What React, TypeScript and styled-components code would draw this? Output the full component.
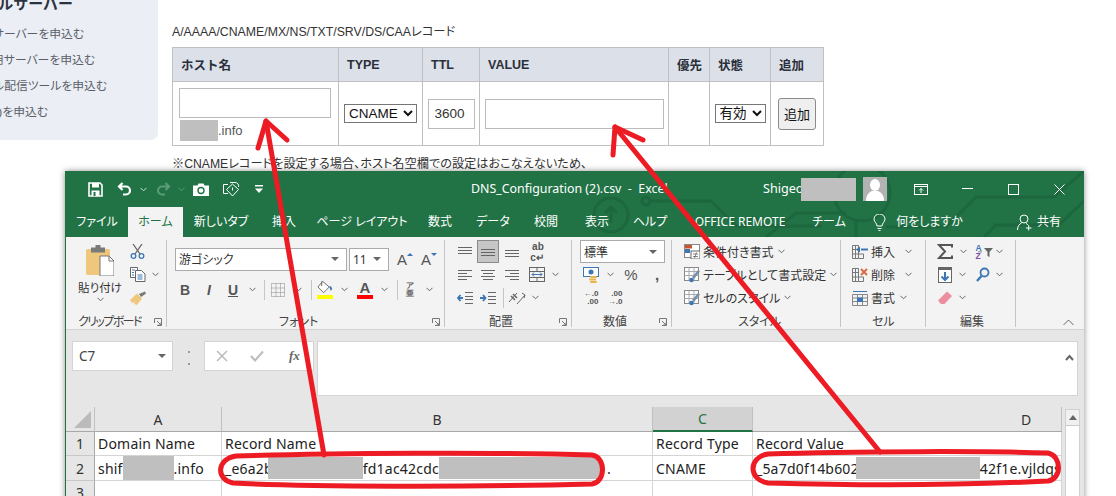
import React from "react";
import styled, { createGlobalStyle } from "styled-components";

const Global = createGlobalStyle`
  html, body {
    margin: 0;
    padding: 0;
    background: #fff;
    font-family: "Liberation Sans", "Noto Sans CJK JP", sans-serif;
  }
`;

const Page = styled.div`
  position: relative;
  width: 1116px;
  height: 496px;
  overflow: hidden;
  background: #fff;
`;

/* web page behind the excel window */
const Web = styled.div`
  display: flex;
  height: 100%;
`;

const Sidebar = styled.nav`
  flex: none;
  width: 158px;
  height: 140px;
  box-sizing: border-box;
  background: #ebeef4;
  border-bottom-right-radius: 7px;
  color: #5a5f6a;
  font-size: 11.8px;
`;

const SideTitle = styled.div`
  display: flex;
  justify-content: flex-end;
  width: 73px;
  height: 12px;
  margin-bottom: 13px;
  white-space: nowrap;
  font-size: 15px;
  font-weight: 700;
  line-height: 7px;
  color: #2c3340;
`;

const SideItem = styled.div<{ $end: number }>`
  display: flex;
  justify-content: flex-end;
  width: ${(p) => p.$end}px;
  height: 26px;
  line-height: 18px;
  white-space: nowrap;
  font-feature-settings: "palt";
`;

const Main = styled.main`
  padding: 24px 0 0 14px;
  color: #333;
`;

const Heading = styled.div`
  height: 23px;
  font-size: 12.3px;
  line-height: 16px;
  font-feature-settings: "palt";
`;

const DnsTable = styled.table`
  width: 651px;
  table-layout: fixed;
  border-collapse: collapse;
  font-size: 12.5px;

  th,
  td {
    border: 1px solid #c0c0c0;
    padding: 0;
  }

  th {
    height: 34px;
    box-sizing: border-box;
    padding-left: 8px;
    background: #dce0e8;
    text-align: left;
    color: #2a2f3a;
  }

  td {
    height: 64px;
    box-sizing: border-box;
    vertical-align: middle;
    text-align: center;
  }
`;

const HostCell = styled.div`
  display: flex;
  flex-direction: column;
  padding: 1px 6px 0;
  text-align: left;
`;

const TextField = styled.input<{ $w: number }>`
  display: block;
  width: ${(p) => p.$w}px;
  height: 30px;
  box-sizing: border-box;
  margin: 0 auto;
  padding: 0 6px;
  border: 1px solid #bbb;
  background: #fff;
  color: #333;
  font: 13.5px "Liberation Sans", sans-serif;
`;

const HostField = styled(TextField)`
  margin: 0 0 2px;
`;

const SubDomain = styled.div`
  display: flex;
  align-items: center;
  margin-left: 1px;
  font-size: 13px;
  color: #555;
`;

const Mask = styled.span<{ $w: number; $h?: number; $ml?: number }>`
  flex: none;
  display: inline-block;
  width: ${(p) => p.$w}px;
  height: ${(p) => p.$h ?? 22}px;
  margin-left: ${(p) => p.$ml ?? 0}px;
  background: #bfbfbf;
`;

const NativeSelect = styled.select<{ $w: number }>`
  width: ${(p) => p.$w}px;
  height: 19px;
  padding: 0;
  font: 13.5px "Liberation Sans", "Noto Sans CJK JP", sans-serif;
  background: #fff;
  color: #111;
`;

const AddButton = styled.button`
  width: 38px;
  height: 32px;
  padding: 0;
  border: 1px solid #8a8a8a;
  border-radius: 3px;
  background: #efefef;
  color: #111;
  font: 13px "Noto Sans CJK JP", sans-serif;
`;

const Note = styled.p`
  margin: 10px 0 0;
  font-size: 12.2px;
  line-height: 16px;
  font-feature-settings: "palt";
`;

/* excel window */
const Excel = styled.section`
  position: absolute;
  left: 65px;
  top: 171px;
  width: 1019px;
  height: 330px;
  box-sizing: border-box;
  border-left: 1px solid #217346;
  background: #e6e6e6;
  box-shadow: 0 0 6px rgba(0, 0, 0, 0.45);
  font-family: "Noto Sans", "Noto Sans CJK JP", sans-serif;
  font-feature-settings: "palt";
  overflow: hidden;
`;

const Header = styled.header`
  position: relative;
  background: #217346;
  color: #fff;
  font-size: 12.5px;
`;

const Circuit = styled.svg`
  position: absolute;
  left: 0;
  top: 0;
  pointer-events: none;
`;

const TitleBar = styled.div`
  position: relative;
  display: flex;
  align-items: center;
  height: 36px;
`;

const Cell = styled.span<{ $w: number; $ml?: number }>`
  flex: none;
  display: inline-flex;
  align-items: center;
  justify-content: center;
  width: ${(p) => p.$w}px;
  height: 100%;
  margin-left: ${(p) => p.$ml ?? 0}px;
`;

const WindowTitle = styled.span`
  flex: none;
  width: 204px;
  margin: 0 0 2px 197px;
  white-space: pre;
  font-size: 12.4px;
`;

const UserName = styled.span`
  flex: none;
  width: 38px;
  margin: 0 0 2px 88px;
  font-size: 12.6px;
`;

const Avatar = styled.span`
  flex: none;
  display: flex;
  width: 24px;
  height: 24px;
  margin-left: 7px;
  background: #b2b2b2;
`;

const TabBar = styled.div`
  position: relative;
  display: flex;
  align-items: stretch;
  height: 30px;
`;

const Tab = styled.span<{ $w: number; $active?: boolean; $ml?: number }>`
  flex: none;
  display: flex;
  align-items: center;
  justify-content: center;
  width: ${(p) => p.$w}px;
  box-sizing: border-box;
  margin-left: ${(p) => p.$ml ?? 0}px;
  padding-bottom: 2px;
  white-space: pre;
  font-size: 12px;
  background: ${(p) => (p.$active ? "#f3f3f3" : "transparent")};
  color: ${(p) => (p.$active ? "#217346" : "#fff")};
`;

const Ribbon = styled.div`
  position: relative;
  display: flex;
  height: 93px;
  box-sizing: border-box;
  padding: 3px 0 2px;
  border-bottom: 1px solid #d2d2d2;
  background: #f3f3f3;
  color: #333;
  font-size: 12px;
`;

const Group = styled.div<{ $w: number; $pl?: number }>`
  position: relative;
  flex: none;
  display: flex;
  flex-direction: column;
  width: ${(p) => p.$w}px;
  box-sizing: border-box;
  padding-left: ${(p) => p.$pl ?? 0}px;
  border-right: 1px solid #c4c4c4;
`;

const GroupLabel = styled.div<{ $pl: number; $track?: number }>`
  position: absolute;
  left: 0;
  right: 0;
  bottom: -2px;
  height: 15px;
  padding-left: ${(p) => p.$pl}px;
  font-size: 12px;
  line-height: 15px;
  letter-spacing: ${(p) => p.$track ?? 0}px;
  color: #444;
  white-space: nowrap;
`;

const Launcher = styled.svg`
  position: absolute;
  right: 4px;
  bottom: 1px;
`;

const Row = styled.div`
  display: flex;
  align-items: center;
  height: 23px;
  white-space: nowrap;
`;

const RowLabel = styled.span`
  margin: 0 4px 0 3px;
`;

const Combo = styled.div<{ $w: number; $ml?: number }>`
  flex: none;
  display: flex;
  align-items: center;
  justify-content: space-between;
  width: ${(p) => p.$w}px;
  height: 23px;
  box-sizing: border-box;
  margin-left: ${(p) => p.$ml ?? 0}px;
  padding: 0 7px 0 3px;
  border: 1px solid #ababab;
  background: #fff;
  color: #333;
  font-size: 12px;
`;

const Caret = styled.span`
  width: 0;
  height: 0;
  border-left: 4px solid transparent;
  border-right: 4px solid transparent;
  border-top: 4px solid #666;
`;

const Glyph = styled.span<{ $bold?: boolean; $italic?: boolean; $under?: boolean; $size?: number }>`
  font: ${(p) => (p.$italic ? "italic " : "")}${(p) => (p.$bold ? "700 " : "")}${(p) => p.$size ?? 14}px "Liberation Sans", sans-serif;
  text-decoration: ${(p) => (p.$under ? "underline" : "none")};
  color: #555;
`;

const ColorGlyph = styled.span<{ $bar: string }>`
  display: block;
  width: 16px;
  border-bottom: 4px solid ${(p) => p.$bar};
  text-align: center;
  font: 700 15px/15px "Liberation Sans", sans-serif;
  color: #555;
`;

const FillBar = styled.span`
  display: flex;
  width: 16px;
  justify-content: center;
  border-bottom: 4px solid #ff0;
`;

const Sep = styled.span<{ $ml: number }>`
  flex: none;
  width: 1px;
  height: 20px;
  margin-left: ${(p) => p.$ml}px;
  background: #c6c6c6;
`;

const Pressed = styled(Cell)`
  box-sizing: border-box;
  border: 1px solid #8a8a8a;
  background: #c6c6c6;
`;

const TinyStack = styled.span`
  display: flex;
  flex-direction: column;
  align-items: flex-end;
  font: 700 8px/8px "Liberation Sans", sans-serif;
  color: #555;
`;

const PasteColumn = styled.div`
  display: flex;
  flex-direction: column;
  align-items: center;
  width: 56px;
  padding-top: 5px;
  font-size: 11.5px;
`;

const PasteLabel = styled.span`
  margin: 5px 0 2px;
  line-height: 14px;
`;

const ClipRow = styled.div`
  display: flex;
`;

const ClipTools = styled.div`
  display: flex;
  flex-direction: column;
  padding-left: 2px;
`;

const Collapse = styled.svg`
  position: absolute;
  right: 10px;
  bottom: 3px;
`;

const FormulaBar = styled.div`
  display: flex;
  height: 77px;
  box-sizing: border-box;
  padding: 11px 6px 11px 6px;
`;

const NameBox = styled.div`
  flex: none;
  display: flex;
  align-items: center;
  justify-content: space-between;
  width: 101px;
  height: 30px;
  box-sizing: border-box;
  padding: 0 6px 0 6px;
  border: 1px solid #d4d4d4;
  background: #fff;
  font-size: 13.5px;
  color: #444;
`;

const Dots = styled.span`
  flex: none;
  width: 2px;
  height: 10px;
  margin: 10px 14px 0 15px;
  border-top: 2px dotted #999;
  border-bottom: 2px dotted #999;
`;

const FxBox = styled.div`
  flex: none;
  display: flex;
  align-items: center;
  width: 110px;
  height: 30px;
  box-sizing: border-box;
  border: 1px solid #d4d4d4;
  background: #fff;
`;

const FxText = styled.span`
  margin-left: 14px;
  font: italic 700 13px "Liberation Serif", serif;
  color: #666;
`;

const FormulaInput = styled.div`
  flex: none;
  width: 761px;
  height: 55px;
  box-sizing: border-box;
  margin-left: 3px;
  border: 1px solid #d4d4d4;
  background: #fff;
  position: relative;
`;

const FormulaCaret = styled.svg`
  position: absolute;
  right: 3px;
  top: 12px;
`;

const SheetWrap = styled.div`
  display: flex;
  font-size: 14px;
  color: #222;
`;

const Grid = styled.div`
  flex: none;
  display: grid;
  grid-template-columns: 29px 127px 431px 100px 309px;
  grid-template-rows: 25px 24px 25px 24px;
`;

const ColHead = styled.div<{ $active?: boolean; $pl?: number }>`
  display: flex;
  align-items: center;
  justify-content: ${(p) => (p.$pl ? "flex-start" : "center")};
  box-sizing: border-box;
  padding-left: ${(p) => p.$pl ?? 0}px;
  border-right: 1px solid #c0c0c0;
  border-bottom: ${(p) => (p.$active ? "2px solid #217346" : "1px solid #a8a8a8")};
  background: ${(p) => (p.$active ? "#d2d2d2" : "#e6e6e6")};
  color: ${(p) => (p.$active ? "#217346" : "#333")};
`;

const Corner = styled.div`
  display: flex;
  align-items: flex-end;
  justify-content: flex-end;
  box-sizing: border-box;
  padding: 0 3px 3px 0;
  border-right: 1px solid #c0c0c0;
  border-bottom: 1px solid #a8a8a8;
`;

const RowHead = styled.div`
  display: flex;
  align-items: center;
  justify-content: center;
  box-sizing: border-box;
  border-right: 1px solid #a8a8a8;
  border-bottom: 1px solid #c8c8c8;
  background: #e6e6e6;
  color: #333;
`;

const DataCell = styled.div`
  display: flex;
  align-items: center;
  box-sizing: border-box;
  padding-left: 3px;
  border-right: 1px solid #d4d4d4;
  border-bottom: 1px solid #d4d4d4;
  background: #fff;
  white-space: nowrap;
  letter-spacing: 0.2px;
  overflow: hidden;
`;

const DotText = styled.span`
  margin-left: 6px;
`;

const ScrollBar = styled.div`
  flex: none;
  width: 15px;
  margin: 2px 0 0 3px;
  background: #fff;
  border: 1px solid #d0d0d0;
  box-sizing: border-box;
`;

const ScrollUp = styled.div`
  display: flex;
  align-items: center;
  justify-content: center;
  height: 15px;
  background: #f0f0f0;
  border-bottom: 1px solid #c8c8c8;
`;

const Overlay = styled.svg`
  position: absolute;
  left: 0;
  top: 0;
  pointer-events: none;
`;

/* icons */
const Chev = ({ color = "#666" }: { color?: string }) => (
  <svg width="7" height="5" viewBox="0 0 7 5" style={{ flex: "none" }}>
    <path d="M.5.8 3.5 3.8 6.5.8" fill="none" stroke={color} />
  </svg>
);

const SaveIcon = () => (
  <svg width="15" height="15" viewBox="0 0 15 15">
    <path d="M1 1h11l2 2v11H1z" fill="none" stroke="#fff" strokeWidth="1.6" />
    <rect x="4" y="1" width="7" height="4.5" fill="#fff" />
    <rect x="3.5" y="8.5" width="8" height="5.5" fill="#fff" />
    <rect x="5.5" y="10" width="2" height="4" fill="#217346" />
  </svg>
);

const UndoIcon = ({ flip, color }: { flip?: boolean; color: string }) => (
  <svg width="15" height="14" viewBox="0 0 15 14" style={{ transform: flip ? "scaleX(-1)" : undefined }}>
    <path d="M5.5 1 2 4.5 5.5 8M2.5 4.5h6.5a4 4 0 0 1 0 8H6" fill="none" stroke={color} strokeWidth="2.2" />
  </svg>
);

const CameraIcon = () => (
  <svg width="16" height="13" viewBox="0 0 16 13">
    <path d="M0 2.500h4.500l1-2h5l1 2H16V13H0z" fill="#fff" />
    <circle cx="8" cy="7.500" r="3" fill="none" stroke="#217346" strokeWidth="1.400" />
  </svg>
);

const TouchIcon = () => (
  <svg width="17" height="16" viewBox="0 0 17 16" fill="none" stroke="#fff">
    <path d="M5 3.500H.5v9H5" />
    <path d="M7 1.500 12 1.500a3.500 3.500 0 0 1 3.500 4.500" />
    <path d="M9.500 3 15.500 8.500 9.500 15 3.500 8.500z" />
    <path d="M9.500 6.500v3" />
  </svg>
);

const QatMore = () => (
  <svg width="8" height="8" viewBox="0 0 8 8">
    <rect x="0" y="0" width="8" height="1.500" fill="#fff" />
    <path d="M0 3.500h8L4 8z" fill="#fff" />
  </svg>
);

const Figure = () => (
  <svg width="24" height="24" viewBox="0 0 24 24">
    <ellipse cx="12" cy="8" rx="5" ry="6" fill="#fff" />
    <path d="M3 24c0-6 3-9 6-10h6c3 1 6 4 6 10z" fill="#fff" />
  </svg>
);

const RibbonMode = () => (
  <svg width="14" height="11" viewBox="0 0 14 11" fill="none" stroke="#fff">
    <rect x=".5" y=".5" width="13" height="10" />
    <path d="M.5 2.500h13M7 9V4.500M5 6.500 7 4.500l2 2" />
  </svg>
);

const WinMin = () => (
  <svg width="11" height="2" viewBox="0 0 11 2">
    <rect width="11" height="1" fill="#fff" />
  </svg>
);

const WinMax = () => (
  <svg width="11" height="11" viewBox="0 0 11 11">
    <rect x=".5" y=".5" width="10" height="10" fill="none" stroke="#fff" />
  </svg>
);

const WinClose = () => (
  <svg width="11" height="11" viewBox="0 0 11 11">
    <path d="M.5.500 10.500 10.500M10.500.500 .5 10.500" stroke="#fff" />
  </svg>
);

const Bulb = () => (
  <svg width="13" height="17" viewBox="0 0 13 17" fill="none" stroke="#fff">
    <path d="M4 12c0-3-3-4-3-7a5.500 5 0 0 1 11 0c0 3-3 4-3 7z" />
    <path d="M4.500 14.500h4M5.500 16.500h2" />
  </svg>
);

const ShareIcon = () => (
  <svg width="15" height="17" viewBox="0 0 15 17" fill="none" stroke="#fff">
    <circle cx="7" cy="5" r="4" />
    <path d="M.5 16c0-4 2-6 4-7M9 9.500c1 .4 2 1 2.500 2M9 14h5.500M11.700 11.500v5" />
  </svg>
);

const PasteIcon = () => (
  <svg width="28" height="31" viewBox="0 0 28 31">
    <rect x="0" y="4" width="24" height="26" rx="2" fill="#eec77d" />
    <rect x="5" y="2.500" width="14" height="5" fill="#7a7a7a" />
    <rect x="9.500" y="0" width="5" height="4" fill="#7a7a7a" />
    <path d="M14 11h9l5 5v15H14z" fill="#fff" stroke="#777" />
    <path d="M23 11v5h5" fill="none" stroke="#777" />
  </svg>
);

const ScissorsIcon = () => (
  <svg width="15" height="15" viewBox="0 0 15 15" fill="none">
    <path d="M3 0 10 10M12 0 5 10" stroke="#666" strokeWidth="1.300" />
    <circle cx="3.500" cy="12" r="2.300" stroke="#3d76b5" strokeWidth="1.300" />
    <circle cx="11.500" cy="12" r="2.300" stroke="#3d76b5" strokeWidth="1.300" />
  </svg>
);

const CopyIcon = () => (
  <svg width="16" height="15" viewBox="0 0 16 15" fill="#fff" stroke="#666">
    <path d="M.5.500h7v10h-7z" />
    <path d="M5.500 3.500h6l3.500 3.500v7.500H5.500z" />
    <path d="M2 3h3M2 5.500h2M2 8h2M7.500 8h5M7.500 10h5M7.500 12h5" stroke="#3d76b5" fill="none" />
  </svg>
);

const BrushIcon = () => (
  <svg width="16" height="14" viewBox="0 0 16 14">
    <path d="M9 3 15 0.500 16 2.500 11 6z" fill="#777" />
    <path d="M0 9 7 2.500l5 5L7 14 4 13l1-2-3 1z" fill="#eec77d" />
  </svg>
);

const BorderIcon = () => (
  <svg width="14" height="14" viewBox="0 0 14 14" fill="none" stroke="#888" strokeDasharray="1 1">
    <rect x=".5" y=".5" width="13" height="13" />
    <path d="M.5 5h13M.5 9.500h13M5 .5v13M9.500 .5v13" />
  </svg>
);

const FillIcon = () => (
  <svg width="17" height="15" viewBox="0 0 17 15">
    <path d="M6 1 1 7l6 6 6-6z" fill="#fff" stroke="#666" />
    <path d="M5 1v5" stroke="#666" />
    <path d="M13 6c2 0 3 1.500 3 3.500L14.500 11z" fill="#3d76b5" />
  </svg>
);

const Launch = () => (
  <Launcher width="8" height="8" viewBox="0 0 8 8" fill="none" stroke="#777">
    <path d="M.5 5V.5H7.500V7.500H3M3 3 7 7M4.500 7H7V4.500" />
  </Launcher>
);

type Line = [number, number, number];
const Lines = ({ lines, w = 14, h = 12 }: { lines: Line[]; w?: number; h?: number }) => (
  <svg width={w} height={h} viewBox={`0 0 ${w} ${h}`}>
    {lines.map(([a, b, y], i) => (
      <path key={i} d={`M${a} ${y + 0.5}H${b}`} stroke="#666" />
    ))}
  </svg>
);

const ALIGN_TOP: Line[] = [[0, 14, 1], [0, 14, 4], [0, 14, 7]];
const ALIGN_MID: Line[] = [[0, 14, 3], [0, 14, 6], [0, 14, 9]];
const ALIGN_BOT: Line[] = [[0, 14, 4], [0, 14, 7], [0, 14, 10]];
const TEXT_LEFT: Line[] = [[0, 14, 0], [0, 9, 3], [0, 14, 6], [0, 9, 9]];
const TEXT_CENTER: Line[] = [[0, 14, 0], [2, 12, 3], [0, 14, 6], [2, 12, 9]];
const TEXT_RIGHT: Line[] = [[0, 14, 0], [5, 14, 3], [0, 14, 6], [5, 14, 9]];

const WrapIcon = () => (
  <TinyStack>
    <Glyph $size={10} $bold>ab</Glyph>
    <Glyph $size={10} $bold>c↵</Glyph>
  </TinyStack>
);

const MergeIcon = () => (
  <svg width="16" height="15" viewBox="0 0 16 15" fill="none" stroke="#666">
    <rect x=".5" y=".5" width="15" height="14" />
    <path d="M.5 4.500h15M.5 10.500h15M8 .5v4M8 10.500v4" />
    <path d="M3 7.500h10M5 5.500l-2 2 2 2M11 5.500l2 2-2 2" stroke="#3d76b5" />
  </svg>
);

const IndentIcon = ({ out }: { out?: boolean }) => (
  <svg width="16" height="12" viewBox="0 0 16 12" fill="none">
    <path d="M8 .5h8M8 4.500h8M8 7.500h8M8 11.500h8" stroke="#666" />
    <path
      d={out ? "M6 6H1M3.500 3 1 6l2.500 3" : "M0 6h5.500M3 3l2.500 3L3 9"}
      stroke="#3d76b5"
      strokeWidth="1.800"
    />
  </svg>
);

const OrientIcon = () => (
  <svg width="18" height="15" viewBox="0 0 18 15" fill="none" stroke="#666">
    <path d="M1 12 9 3M9 14l8-9M14 3l3 2-1 3" />
    <path d="M3 6l4 4M5 4l4 4" strokeWidth="1.500" />
  </svg>
);

const CurrencyIcon = () => (
  <svg width="16" height="16" viewBox="0 0 16 16">
    <rect x=".5" y=".5" width="15" height="9" fill="#fff" stroke="#3d76b5" />
    <circle cx="8" cy="5" r="2.500" fill="#3d76b5" />
    <rect x="7" y="9" width="7" height="2" rx="1" fill="#e8b64c" />
    <rect x="6" y="11.500" width="7" height="2" rx="1" fill="#e8b64c" />
    <rect x="7" y="14" width="7" height="2" rx="1" fill="#e8b64c" />
  </svg>
);

const DecimalIcon = ({ inc }: { inc?: boolean }) => (
  <TinyStack>
    <span>{inc ? "←.0" : ".00"}</span>
    <span>{inc ? ".00" : "→.0"}</span>
  </TinyStack>
);

const CondIcon = () => (
  <svg width="16" height="15" viewBox="0 0 16 15">
    <rect x=".5" y=".5" width="15" height="13" fill="#fff" stroke="#888" />
    <rect x="1" y="1" width="7" height="3.500" fill="#c9562f" />
    <rect x="1" y="5" width="5" height="4" fill="#3d76b5" />
    <rect x="7" y="7" width="9" height="8" fill="#fff" stroke="#666" />
    <path d="M9 10h5M9 12.500h5M12.500 8.500l-2 5.500" stroke="#666" strokeWidth=".8" />
  </svg>
);

const TableStyleIcon = () => (
  <svg width="16" height="16" viewBox="0 0 16 16" fill="none">
    <rect x=".5" y=".5" width="14" height="13" fill="#fff" stroke="#888" />
    <path d="M.5 4.500h14M.5 8.500h14M5 .5v13M10 .5v13" stroke="#aaa" />
    <path d="M8 10 14 3l2 1.500L10 12z" fill="#7a8fa8" />
    <circle cx="7.500" cy="13" r="2.300" fill="#3d76b5" />
  </svg>
);

const GridIcon = ({ children }: { children: React.ReactNode }) => (
  <svg width="16" height="16" viewBox="0 0 16 16" fill="none">
    <path d="M.5 1.500h6v13h-6zM.5 5.500h6M.5 10h6M3.500 1.500v13M6.500 10h5v4.500h-5" stroke="#777" />
    {children}
  </svg>
);

const SigmaIcon = () => (
  <svg width="16" height="15" viewBox="0 0 16 15">
    <path d="M15 3.500V1H2l6 6.500L2 14h13v-2.500" fill="none" stroke="#555" strokeWidth="2" />
  </svg>
);

const FillDownIcon = () => (
  <svg width="14" height="16" viewBox="0 0 14 16">
    <rect x=".5" y=".5" width="13" height="15" fill="#fff" stroke="#666" />
    <rect width="14" height="3" fill="#666" />
    <path d="M7 5v8M3.500 9.500 7 13l3.500-3.500" fill="none" stroke="#3d76b5" strokeWidth="2" />
  </svg>
);

const SortIcon = () => (
  <svg width="16" height="16" viewBox="0 0 16 16">
    <path d="M7 4h9l-3.500 4v5L10.500 12V8z" fill="#666" />
    <rect x="1" y="7.400" width="4" height="1" fill="#888" />
  </svg>
);

const SortLetters = styled.span`
  display: flex;
  flex-direction: column;
  font: 700 8.500px/8px "Liberation Sans", sans-serif;
  margin-right: -5px;
  color: #3d76b5;
  & > span + span {
    color: #7d4fa8;
  }
`;

const FindIcon = () => (
  <svg width="14" height="15" viewBox="0 0 14 15" fill="none" stroke="#3d76b5">
    <circle cx="8.500" cy="5.500" r="4" strokeWidth="1.800" />
    <path d="M5.500 9 1 14" strokeWidth="2.400" />
  </svg>
);

const EraserIcon = () => (
  <svg width="14" height="14" viewBox="0 0 14 14">
    <path d="M9 0.500 14 5l-7.500 8H3L0 9.500z" fill="#ec8e9e" />
  </svg>
);

const Tiny = ({ children, dir }: { children: string; dir: "up" | "down" }) => (
  <>
    <Glyph $size={15}>{children}</Glyph>
    <svg width="6" height="12" viewBox="0 0 6 12" style={{ alignSelf: "flex-start", marginTop: 5 }}>
      <path d={dir === "up" ? "M0 4 3 1l3 3z" : "M0 1h6L3 4z"} fill="#3d76b5" />
    </svg>
  </>
);

const TOP_TABS: [string, number][] = [
  ["新しいタブ", 76],
  ["挿入", 50],
  ["ページ レイアウト", 106],
  ["数式", 50],
  ["データ", 56],
  ["校閲", 50],
  ["表示", 52],
  ["ヘルプ", 54],
  ["OFFICE REMOTE", 126],
  ["チーム", 52],
];

export default function App() {
  return (
    <Page>
      <Global />
      <Web>
        <Sidebar>
          <SideTitle>レンタルサーバー</SideTitle>
          <SideItem $end={84}>レンタルサーバーを申込む</SideItem>
          <SideItem $end={95}>法人用サーバーを申込む</SideItem>
          <SideItem $end={107}>メール配信ツールを申込む</SideItem>
          <SideItem $end={48}>(その他)を申込む</SideItem>
        </Sidebar>
        <Main>
          <Heading>A/AAAA/CNAME/MX/NS/TXT/SRV/DS/CAAレコード</Heading>
          <DnsTable>
            <colgroup>
              <col width="166" />
              <col width="84" />
              <col width="57" />
              <col width="189" />
              <col width="41" />
              <col width="61" />
              <col width="53" />
            </colgroup>
            <thead>
              <tr>
                <th>ホスト名</th>
                <th>TYPE</th>
                <th>TTL</th>
                <th>VALUE</th>
                <th>優先</th>
                <th>状態</th>
                <th>追加</th>
              </tr>
            </thead>
            <tbody>
              <tr>
                <td>
                  <HostCell>
                    <HostField $w={152} readOnly />
                    <SubDomain>
                      <Mask $w={38} $h={21} />
                      .info
                    </SubDomain>
                  </HostCell>
                </td>
                <td>
                  <NativeSelect $w={73} defaultValue="CNAME">
                    <option>CNAME</option>
                    <option>A</option>
                  </NativeSelect>
                </td>
                <td>
                  <TextField $w={47} readOnly defaultValue="3600" />
                </td>
                <td>
                  <TextField $w={179} readOnly />
                </td>
                <td />
                <td>
                  <NativeSelect $w={51} defaultValue="有効">
                    <option>有効</option>
                    <option>無効</option>
                  </NativeSelect>
                </td>
                <td>
                  <AddButton>追加</AddButton>
                </td>
              </tr>
            </tbody>
          </DnsTable>
          <Note>※CNAMEレコードを設定する場合、ホスト名空欄での設定はおこなえないため、</Note>
        </Main>
      </Web>

      <Excel>
        <Header>
          <Circuit width="1018" height="66" viewBox="0 0 1018 66" fill="none" stroke="#1d673f" strokeWidth="3">
            <circle cx="545" cy="44" r="17" />
            <path d="M545 52V36M539 42l6-6 6 6" />
            <path d="M585 30h60l25 25h10a8 8 0 0 1 16 0h60" />
            <circle cx="796" cy="22" r="28" />
            <path d="M790 48v18M700 66l30-24h50" />
            <path d="M1018 0l-30 26H910l-30 30h-60" />
            <path d="M1018 30l-25 24H930l-12 12" />
            <circle cx="580" cy="30" r="4" />
          </Circuit>
          <TitleBar>
            <Cell $w={15} />
            <Cell $w={28}><SaveIcon /></Cell>
            <Cell $w={30}><UndoIcon color="#fff" /></Cell>
            <Cell $w={9}><Chev color="#cfe3d7" /></Cell>
            <Cell $w={30}><UndoIcon flip color="#5a9a78" /></Cell>
            <Cell $w={6}><Chev color="#5a9a78" /></Cell>
            <Cell $w={34}><CameraIcon /></Cell>
            <Cell $w={26}><TouchIcon /></Cell>
            <Cell $w={30}><QatMore /></Cell>
            <WindowTitle>DNS_Configuration (2).csv  -  Excel</WindowTitle>
            <UserName>Shigeo</UserName>
            <Mask $w={55} $h={23} />
            <Avatar><Figure /></Avatar>
            <Cell $w={46} $ml={11}><RibbonMode /></Cell>
            <Cell $w={46}><WinMin /></Cell>
            <Cell $w={46}><WinMax /></Cell>
            <Cell $w={46}><WinClose /></Cell>
          </TitleBar>
          <TabBar>
            <Tab $w={62}>ファイル</Tab>
            <Tab $w={55} $active>ホーム</Tab>
            {TOP_TABS.map(([label, w]) => (
              <Tab key={label} $w={w}>{label}</Tab>
            ))}
            <Cell $w={13} $ml={18}><Bulb /></Cell>
            <Tab $w={59} $ml={14}>何をしますか</Tab>
            <Cell $w={15} $ml={58}><ShareIcon /></Cell>
            <Tab $w={24} $ml={5}>共有</Tab>
          </TabBar>
        </Header>

        <Ribbon>
          <Group $w={101} $pl={6}>
            <ClipRow>
              <PasteColumn>
                <PasteIcon />
                <PasteLabel>貼り付け</PasteLabel>
                <Chev />
              </PasteColumn>
              <ClipTools>
                <Row><ScissorsIcon /></Row>
                <Row><CopyIcon /><Cell $w={18}><Chev /></Cell></Row>
                <Row><BrushIcon /></Row>
              </ClipTools>
            </ClipRow>
            <GroupLabel $pl={12} $track={-1.6}>クリップボード</GroupLabel>
            <Launch />
          </Group>

          <Group $w={278} $pl={8}>
            <Row style={{ marginTop: 7, height: 24 }}>
              <Combo $w={172}>游ゴシック<Caret /></Combo>
              <Combo $w={40} $ml={2}>11<Caret /></Combo>
              <Cell $w={24} $ml={4}><Tiny dir="up">A</Tiny></Cell>
              <Cell $w={24}><Tiny dir="down">A</Tiny></Cell>
            </Row>
            <Row style={{ marginTop: 7 }}>
              <Cell $w={20}><Glyph $bold>B</Glyph></Cell>
              <Cell $w={28}><Glyph $bold $italic>I</Glyph></Cell>
              <Cell $w={20}><Glyph $bold $under>U</Glyph></Cell>
              <Cell $w={18}><Chev /></Cell>
              <Sep $ml={3} />
              <Cell $w={26}><BorderIcon /></Cell>
              <Cell $w={14}><Chev /></Cell>
              <Sep $ml={6} />
              <Cell $w={26}>
                <FillBar><FillIcon /></FillBar>
              </Cell>
              <Cell $w={12}><Chev /></Cell>
              <Cell $w={30}><ColorGlyph $bar="#f00">A</ColorGlyph></Cell>
              <Cell $w={8}><Chev /></Cell>
              <Sep $ml={9} />
              <Cell $w={24}><TinyStack><span>ア</span><span>亜</span></TinyStack></Cell>
              <Cell $w={14}><Chev /></Cell>
            </Row>
            <GroupLabel $pl={112}>フォント</GroupLabel>
            <Launch />
          </Group>

          <Group $w={127} $pl={8}>
            <Row>
              <Cell $w={24}><Lines lines={ALIGN_TOP} /></Cell>
              <Pressed $w={22}><Lines lines={ALIGN_MID} /></Pressed>
              <Cell $w={26}><Lines lines={ALIGN_BOT} /></Cell>
              <Cell $w={24}><WrapIcon /></Cell>
            </Row>
            <Row>
              <Cell $w={24}><Lines lines={TEXT_LEFT} h={10} /></Cell>
              <Cell $w={22}><Lines lines={TEXT_CENTER} h={10} /></Cell>
              <Cell $w={26}><Lines lines={TEXT_RIGHT} h={10} /></Cell>
              <Cell $w={24}><MergeIcon /></Cell>
              <Cell $w={12}><Chev /></Cell>
            </Row>
            <Row>
              <Cell $w={24}><IndentIcon out /></Cell>
              <Cell $w={22}><IndentIcon /></Cell>
              <Sep $ml={4} />
              <Cell $w={26}><OrientIcon /></Cell>
              <Cell $w={10}><Chev /></Cell>
            </Row>
            <GroupLabel $pl={44}>配置</GroupLabel>
            <Launch />
          </Group>

          <Group $w={100} $pl={8}>
            <Combo $w={85}>標準<Caret /></Combo>
            <Row>
              <Cell $w={22}><CurrencyIcon /></Cell>
              <Cell $w={16}><Chev /></Cell>
              <Cell $w={26}><Glyph $size={15}>%</Glyph></Cell>
              <Cell $w={26}><Glyph $bold $size={15}>,</Glyph></Cell>
            </Row>
            <Row>
              <Cell $w={22}><DecimalIcon inc /></Cell>
              <Cell $w={26}><DecimalIcon /></Cell>
            </Row>
            <GroupLabel $pl={31}>数値</GroupLabel>
            <Launch />
          </Group>

          <Group $w={169} $pl={12}>
            <Row><CondIcon /><RowLabel>条件付き書式</RowLabel><Chev /></Row>
            <Row><TableStyleIcon /><RowLabel>テーブルとして書式設定</RowLabel><Chev /></Row>
            <Row><TableStyleIcon /><RowLabel>セルのスタイル</RowLabel><Chev /></Row>
            <GroupLabel $pl={66}>スタイル</GroupLabel>
          </Group>

          <Group $w={85} $pl={11}>
            <Row>
              <GridIcon>
                <path d="M9 5.500h7" stroke="#3d76b5" strokeWidth="2" />
                <path d="M4 5.500 8 2.500v6z" fill="#3d76b5" />
              </GridIcon>
              <RowLabel>挿入</RowLabel>
              <Cell $w={18}><Chev /></Cell>
            </Row>
            <Row>
              <GridIcon>
                <path d="M9 2l6 6M15 2 9 8" stroke="#d9683c" strokeWidth="1.800" />
              </GridIcon>
              <RowLabel>削除</RowLabel>
              <Cell $w={18}><Chev /></Cell>
            </Row>
            <Row>
              <svg width="16" height="16" viewBox="0 0 16 16" fill="none">
                <path d="M.5 4.500h15v11H.5zM.5 8h15M.5 11.500h15M5.500 4.500v11M10.500 4.500v11" stroke="#888" />
                <rect x="5" y="7.500" width="6" height="4.500" fill="#3d76b5" />
                <path d="M1 1.500h14" stroke="#3d76b5" />
              </svg>
              <RowLabel>書式</RowLabel>
              <Cell $w={8}><Chev /></Cell>
            </Row>
            <GroupLabel $pl={31}>セル</GroupLabel>
          </Group>

          <Group $w={90} $pl={10}>
            <Row>
              <Cell $w={18}><SigmaIcon /></Cell>
              <Cell $w={18}><Chev /></Cell>
              <Cell $w={24}>
                <SortLetters><span>A</span><span>Z</span></SortLetters>
                <SortIcon />
              </Cell>
              <Cell $w={6}><Chev /></Cell>
            </Row>
            <Row>
              <Cell $w={18}><FillDownIcon /></Cell>
              <Cell $w={16}><Chev /></Cell>
              <Cell $w={26}><FindIcon /></Cell>
              <Cell $w={6}><Chev /></Cell>
            </Row>
            <Row>
              <Cell $w={18}><EraserIcon /></Cell>
              <Cell $w={16}><Chev /></Cell>
            </Row>
            <GroupLabel $pl={34}>編集</GroupLabel>
          </Group>

          <Collapse width="11" height="7" viewBox="0 0 11 7">
            <path d="M.5 6 5.500 1l5 5" fill="none" stroke="#666" />
          </Collapse>
        </Ribbon>

        <FormulaBar>
          <NameBox>C7<Caret /></NameBox>
          <Dots />
          <FxBox>
            <Cell $w={34}>
              <svg width="12" height="12" viewBox="0 0 12 12">
                <path d="M1 1l10 10M11 1 1 11" stroke="#bbb" strokeWidth="1.500" />
              </svg>
            </Cell>
            <Cell $w={36}>
              <svg width="14" height="12" viewBox="0 0 14 12">
                <path d="M1 6l4 4.500L13 1.500" fill="none" stroke="#bbb" strokeWidth="2" />
              </svg>
            </Cell>
            <FxText>fx</FxText>
          </FxBox>
          <FormulaInput>
            <FormulaCaret width="9" height="7" viewBox="0 0 9 7">
              <path d="M1 6 4.500 2 8 6" fill="none" stroke="#666" strokeWidth="2" />
            </FormulaCaret>
          </FormulaInput>
        </FormulaBar>

        <SheetWrap>
          <Grid>
            <Corner>
              <svg width="17" height="17" viewBox="0 0 17 17">
                <path d="M17 0v17H0z" fill="#bbb" />
              </svg>
            </Corner>
            <ColHead>A</ColHead>
            <ColHead>B</ColHead>
            <ColHead $active>C</ColHead>
            <ColHead $pl={268}>D</ColHead>

            <RowHead>1</RowHead>
            <DataCell>Domain Name</DataCell>
            <DataCell>Record Name</DataCell>
            <DataCell>Record Type</DataCell>
            <DataCell>Record Value</DataCell>

            <RowHead>2</RowHead>
            <DataCell>
              shif<Mask $w={51} $h={25} />.info
            </DataCell>
            <DataCell>
              _e6a2b<Mask $w={95} $ml={-5} />fd1ac42cdc<Mask $w={162} /><DotText>.</DotText>
            </DataCell>
            <DataCell>CNAME</DataCell>
            <DataCell>
              _5a7d0f14b602<Mask $w={124} $ml={-3} />42f1e.vjldqs
            </DataCell>

            <RowHead>3</RowHead>
            <DataCell />
            <DataCell />
            <DataCell />
            <DataCell />
          </Grid>
          <ScrollBar>
            <ScrollUp>
              <svg width="8" height="5" viewBox="0 0 8 5">
                <path d="M0 5 4 0l4 5z" fill="#666" />
              </svg>
            </ScrollUp>
          </ScrollBar>
        </SheetWrap>
      </Excel>

      <Overlay width="1116" height="496" viewBox="0 0 1116 496" fill="none" stroke="#ed1c24" strokeWidth="5" strokeLinejoin="round" strokeLinecap="round">
        <path d="M266 121 324 455" />
        <path d="M258 148 266 121 287 140" />
        <path d="M615 127 880 452" />
        <path d="M613 155 615 127 643 140" />
        <path d="M236 456C330 453 500 452 592 455C606 457 606 482 592 484C480 487 300 487 233 483C216 480 216 459 236 456Z" />
        <path d="M768 454C850 451 1000 451 1048 453C1062 456 1062 479 1048 481C950 486 840 485 768 483C748 480 748 457 768 454Z" />
      </Overlay>
    </Page>
  );
}
